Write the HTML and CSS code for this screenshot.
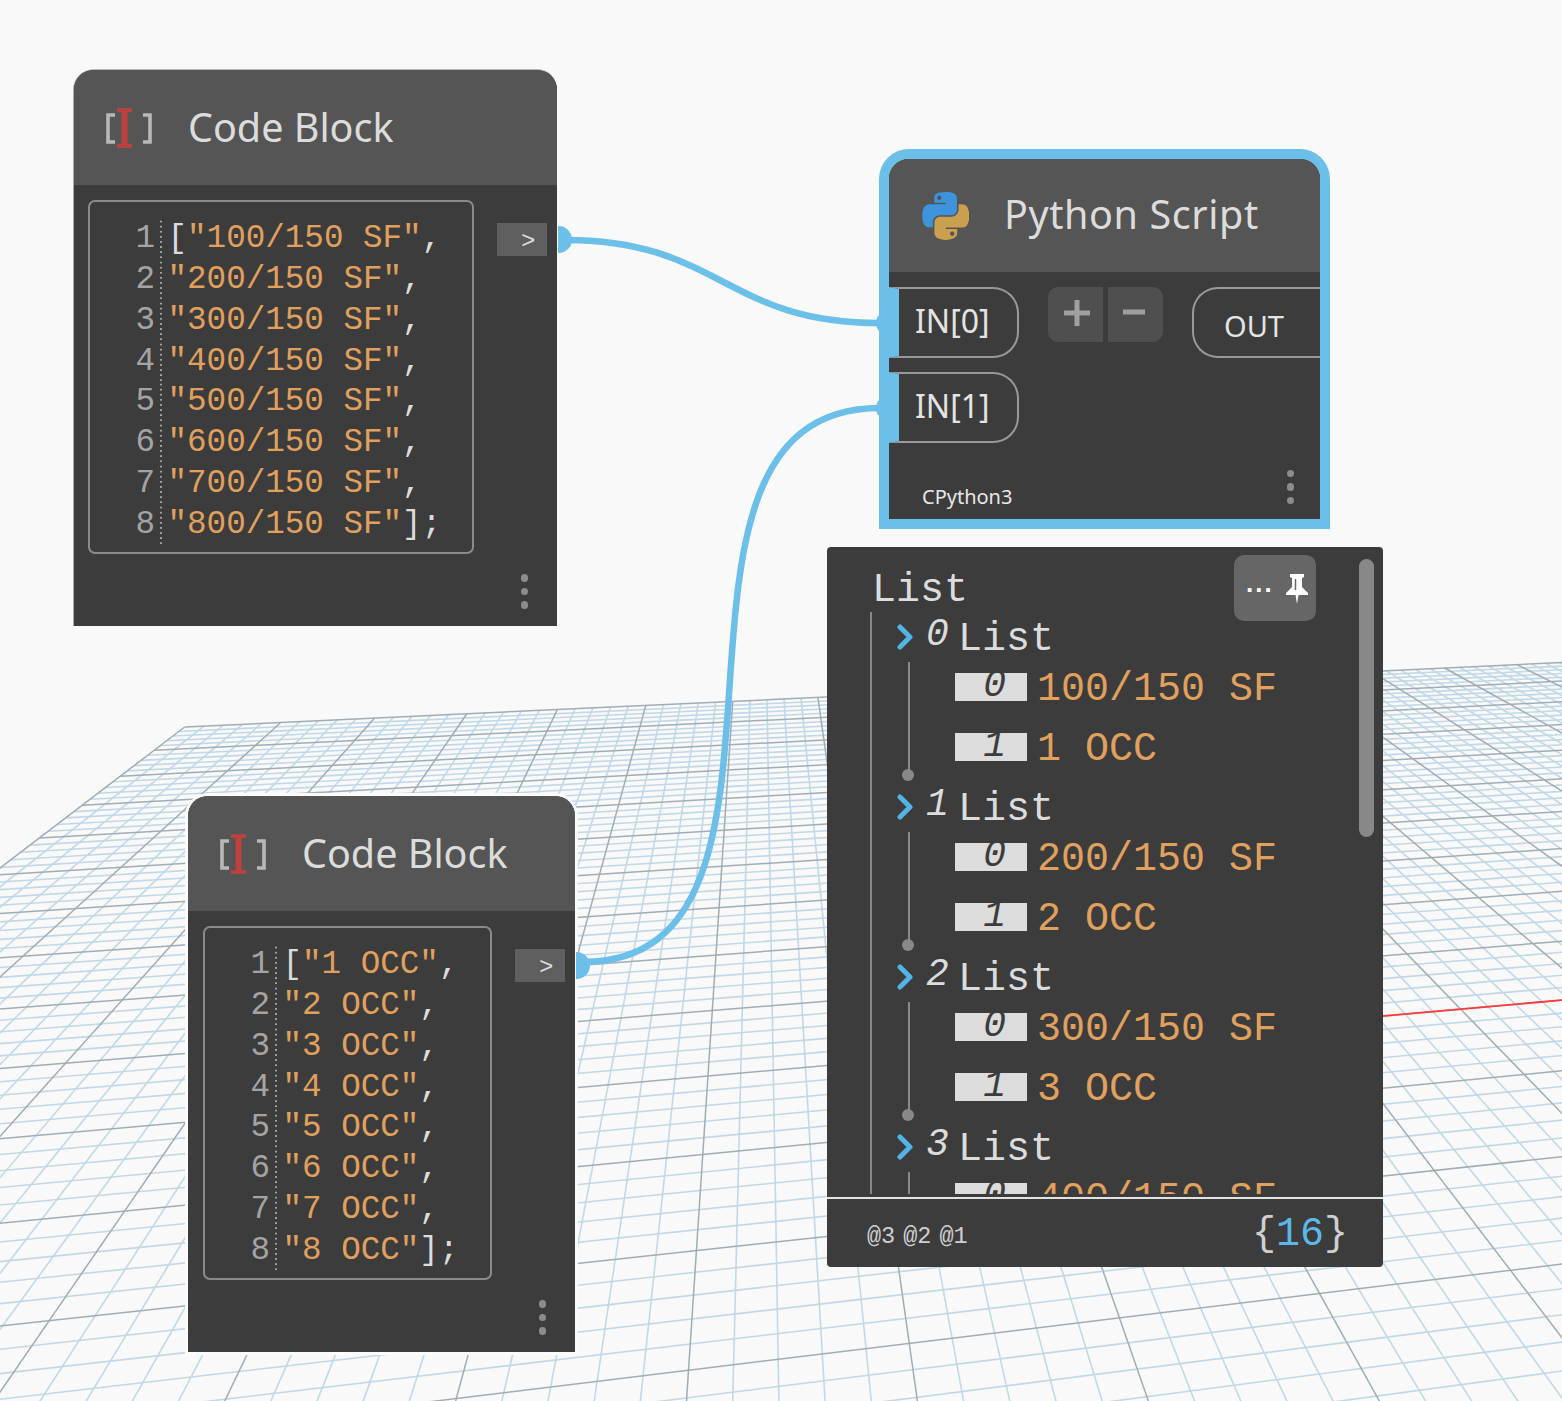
FILE: index.html
```html
<!DOCTYPE html>
<html lang="en">
<head>
<meta charset="utf-8">
<title>Dynamo graph</title>
<link rel="stylesheet" href="styles.css">
</head>
<body>
<main class="canvas">
  <svg id="grid" class="layer" viewBox="0 0 1562 1401" aria-hidden="true"></svg>
  <svg class="layer" viewBox="0 0 1562 1401" aria-hidden="true">
    <path class="wire" d="M565 240 C 720 240, 725 323, 880 323"/>
    <path class="wire" d="M583 962 C 840 962, 618 408, 880 408"/>
  </svg>

  <section class="node code-node node-a">
    <header class="node-head">
      <svg class="cb-icon" viewBox="0 0 48 40"><path class="cb-br" d="M10 7H3V34H10M38 7H45V34H38"/><path class="cb-s" d="M12 2H27M12 38H27"/><path class="cb-i" d="M19.500 2V38"/></svg>
      <h2 class="node-title">Code Block</h2>
    </header>
    <div class="code-body">
      <div class="code-box">
        <div class="cl"><span class="ln">1</span><code><b>[</b><i>"100/150 SF"</i><b>,</b></code></div>
        <div class="cl"><span class="ln">2</span><code><i>"200/150 SF"</i><b>,</b></code></div>
        <div class="cl"><span class="ln">3</span><code><i>"300/150 SF"</i><b>,</b></code></div>
        <div class="cl"><span class="ln">4</span><code><i>"400/150 SF"</i><b>,</b></code></div>
        <div class="cl"><span class="ln">5</span><code><i>"500/150 SF"</i><b>,</b></code></div>
        <div class="cl"><span class="ln">6</span><code><i>"600/150 SF"</i><b>,</b></code></div>
        <div class="cl"><span class="ln">7</span><code><i>"700/150 SF"</i><b>,</b></code></div>
        <div class="cl"><span class="ln">8</span><code><i>"800/150 SF"</i><b>];</b></code></div>
      </div>
      <div class="out-btn">&gt;</div>
    </div>
    <div class="node-foot"><div class="dots"><span></span><span></span><span></span></div></div>
    <span class="out-bump"></span>
  </section>

  <section class="node code-node node-b">
    <header class="node-head">
      <svg class="cb-icon" viewBox="0 0 48 40"><path class="cb-br" d="M10 7H3V34H10M38 7H45V34H38"/><path class="cb-s" d="M12 2H27M12 38H27"/><path class="cb-i" d="M19.500 2V38"/></svg>
      <h2 class="node-title">Code Block</h2>
    </header>
    <div class="code-body">
      <div class="code-box">
        <div class="cl"><span class="ln">1</span><code><b>[</b><i>"1 OCC"</i><b>,</b></code></div>
        <div class="cl"><span class="ln">2</span><code><i>"2 OCC"</i><b>,</b></code></div>
        <div class="cl"><span class="ln">3</span><code><i>"3 OCC"</i><b>,</b></code></div>
        <div class="cl"><span class="ln">4</span><code><i>"4 OCC"</i><b>,</b></code></div>
        <div class="cl"><span class="ln">5</span><code><i>"5 OCC"</i><b>,</b></code></div>
        <div class="cl"><span class="ln">6</span><code><i>"6 OCC"</i><b>,</b></code></div>
        <div class="cl"><span class="ln">7</span><code><i>"7 OCC"</i><b>,</b></code></div>
        <div class="cl"><span class="ln">8</span><code><i>"8 OCC"</i><b>];</b></code></div>
      </div>
      <div class="out-btn">&gt;</div>
    </div>
    <div class="node-foot"><div class="dots"><span></span><span></span><span></span></div></div>
    <span class="out-bump"></span>
  </section>

  <section class="node py-node">
    <header class="py-head">
      <svg class="py-icon" viewBox="0 0 110 112">
        <path fill="#3d93dc" d="M54.900 0C50.300 0.020 45.900 0.400 42.100 1.100 30.800 3.100 28.800 7.300 28.800 15V25.200H55.400V28.600H18.800C11.100 28.600 4.300 33.200 2.200 42.100-0.200 52.200-0.300 58.500 2.200 69.100 4.100 77 8.600 82.600 16.300 82.600H25.400V70.600C25.400 61.800 33 54.100 42 54.100H68.600C76 54.100 81.900 48 81.900 40.600V15C81.900 7.800 75.800 2.400 68.600 1.200 64 0.300 59.500-0.020 54.900 0ZM40.500 8.200C43.300 8.200 45.500 10.500 45.500 13.300 45.500 16.100 43.300 18.300 40.500 18.300 37.700 18.300 35.500 16 35.500 13.300 35.500 10.500 37.800 8.200 40.500 8.200Z"/>
        <path fill="#c9a04e" d="M85.600 28.700V40.600C85.600 49.800 77.800 57.600 69 57.600H42.400C35.100 57.600 29.100 63.800 29.100 71.100V96.500C29.100 103.700 35.400 108 42.400 110 50.800 112.500 58.900 112.900 69 110 75.700 108.100 82.300 104.200 82.300 96.500V86.500H55.700V83.100H95.600C103.300 83.100 106.200 77.700 108.900 69.600 111.700 61.200 111.600 53.200 108.900 42.600 107 34.900 103.300 29.100 95.600 29.100ZM70.700 92.300C73.500 92.300 75.700 94.500 75.700 97.300 75.700 100.100 73.400 102.400 70.700 102.400 67.900 102.400 65.700 100.100 65.700 97.300 65.700 94.500 68 92.300 70.700 92.300Z"/>
      </svg>
      <h2 class="node-title py-title">Python Script</h2>
    </header>
    <div class="py-ports">
      <div class="in-col">
        <div class="port in-port">IN[0]</div>
        <div class="port in-port">IN[1]</div>
      </div>
      <div class="pm">
        <button class="pm-btn pm-add" type="button" aria-label="add"><svg viewBox="0 0 26 26"><path d="M0 13H26M13 0V26"/></svg></button>
        <button class="pm-btn pm-sub" type="button" aria-label="remove"><svg viewBox="0 0 22 26"><path d="M0 12H22"/></svg></button>
      </div>
      <div class="port out-port">OUT</div>
    </div>
    <footer class="py-foot">
      <span class="engine">CPython3</span>
      <div class="dots"><span></span><span></span><span></span></div>
    </footer>
    <span class="in-bump bump-0"></span>
    <span class="in-bump bump-1"></span>
  </section>

  <section class="node watch">
    <div class="watch-scroll">
      <div class="root-label">List</div>
      <div class="tree">
        <div class="group">
          <div class="g-head"><svg class="chev" viewBox="0 0 16 26"><path d="M3 3L13 13L3 23"/></svg><span class="g-idx">0</span><span class="g-label">List</span></div>
          <div class="children">
            <div class="item"><span class="tag"><em>0</em></span><span class="val">100/150 SF</span></div>
            <div class="item"><span class="tag"><em>1</em></span><span class="val">1 OCC</span></div>
          </div>
        </div>
        <div class="group">
          <div class="g-head"><svg class="chev" viewBox="0 0 16 26"><path d="M3 3L13 13L3 23"/></svg><span class="g-idx">1</span><span class="g-label">List</span></div>
          <div class="children">
            <div class="item"><span class="tag"><em>0</em></span><span class="val">200/150 SF</span></div>
            <div class="item"><span class="tag"><em>1</em></span><span class="val">2 OCC</span></div>
          </div>
        </div>
        <div class="group">
          <div class="g-head"><svg class="chev" viewBox="0 0 16 26"><path d="M3 3L13 13L3 23"/></svg><span class="g-idx">2</span><span class="g-label">List</span></div>
          <div class="children">
            <div class="item"><span class="tag"><em>0</em></span><span class="val">300/150 SF</span></div>
            <div class="item"><span class="tag"><em>1</em></span><span class="val">3 OCC</span></div>
          </div>
        </div>
        <div class="group">
          <div class="g-head"><svg class="chev" viewBox="0 0 16 26"><path d="M3 3L13 13L3 23"/></svg><span class="g-idx">3</span><span class="g-label">List</span></div>
          <div class="children">
            <div class="item"><span class="tag"><em>0</em></span><span class="val">400/150 SF</span></div>
            <div class="item"><span class="tag"><em>1</em></span><span class="val">4 OCC</span></div>
          </div>
        </div>
      </div>
    </div>
    <div class="watch-foot">
      <div class="levels"><span>@3</span><span>@2</span><span>@1</span></div>
      <div class="count">{<span>16</span>}</div>
    </div>
    <div class="pin-btn">
      <span class="pin-more">...</span>
      <svg class="pin" viewBox="0 0 22 30"><path d="M4 0H18V3L16 4V13L22 19V21H12.500L11 30 9.500 21H0V19L6 13V4L4 3Z"/><path class="pin-slot" d="M9.500 5V16"/></svg>
    </div>
    <div class="scrollbar"></div>
  </section>
</main>
<script src="grid.js"></script>
</body>
</html>
```
FILE: styles.css
```css
* { box-sizing: border-box; }
html, body { margin: 0; padding: 0; }
body { background: #f9f9f9; overflow: hidden; }
.canvas { position: relative; width: 1562px; height: 1401px; overflow: hidden; font-family: "Noto Sans", sans-serif; }
.layer { position: absolute; left: 0; top: 0; width: 1562px; height: 1401px; }
.wire { fill: none; stroke: #6bbfe8; stroke-width: 6.500; }

.grid-minor { stroke: #c2d8e7; stroke-width: 1.600; }
.grid-major { stroke: #a0adb4; stroke-width: 1.500; }
.grid-axis { stroke: #ff3a3a; stroke-width: 1.800; }

.node { position: absolute; background: #3c3c3c; color: #dcdcdc; }
.node-title { margin: 0 0 2px; font-size: 39.500px; line-height: 50px; font-weight: 400; color: #dcdcdc; }
.py-title { margin-bottom: 4px; letter-spacing: 0.600px; }

/* code block */
.code-node { display: flex; flex-direction: column; border-radius: 20px 20px 0 0; }
.node-a { left: 74px; top: 70px; width: 483px; height: 556px; box-shadow: 0 -1px 0 0 #8a8a8a99, -1px 0 0 0 #aaaaaa; }
.node-b { left: 188px; top: 796px; width: 387px; height: 556px; box-shadow: 0 0 0 3px #fbfbfb; }
.node-head { display: flex; align-items: center; height: 115px; flex: none; padding-left: 31px; gap: 35px; background: #555; border-radius: 20px 20px 0 0; }
.cb-icon { width: 48px; height: 40px; flex: none; }
.cb-br { fill: none; stroke: #b8b8b8; stroke-width: 3.600; }
.cb-s { fill: none; stroke: #c04040; stroke-width: 3.600; }
.cb-i { fill: none; stroke: #c04040; stroke-width: 6; }
.code-body { display: flex; align-items: flex-start; padding: 15px 10px 0 14px; flex: none; }
.node-b .code-body { padding-left: 15px; }
.code-box { flex: 1; height: 354px; padding-top: 17px; border: 2px solid #8a8a8a; border-radius: 7px; }
.cl { display: flex; height: 40.860px; font: 32.600px/40.860px "Liberation Mono", monospace; }
.ln { flex: none; width: 72px; padding-right: 7px; text-align: right; color: #a4a4a4; background: radial-gradient(circle, #a6a6a6 1px, transparent 1.300px) right top / 2px 5.108px repeat-y; }
.cl code { font: inherit; padding-left: 5.500px; white-space: pre; }
.cl i { font-style: normal; color: #e0a05e; }
.cl b { font-weight: 400; color: #dcdcdc; }
.out-btn { flex: none; width: 50px; height: 33px; margin: 23px 0 0 23px; padding-left: 24px; background: #5f5f5f; color: #dcdcdc; font: 24px/37px "Liberation Mono", monospace; }
.node-foot { display: flex; justify-content: flex-end; padding: 20px 29px 0 0; }
.dots { display: flex; flex-direction: column; gap: 6px; }
.dots span { display: block; width: 7.500px; height: 7.500px; border-radius: 50%; background: #8c8c8c; }
.out-bump { position: absolute; right: -15px; top: 156px; width: 14px; height: 27px; background: #6bbfe8; border-radius: 0 14px 14px 0; }

/* python */
.py-node { left: 879px; top: 149px; width: 451px; height: 380px; border: 10px solid #6bbfe8; border-radius: 30px 30px 0 0; display: flex; flex-direction: column; }
.py-head { display: flex; align-items: center; height: 113px; flex: none; padding-left: 33px; gap: 35px; background: #555; border-radius: 20px 20px 0 0; }
.py-icon { width: 47px; height: 48px; flex: none; }
.py-ports { display: flex; align-items: flex-start; padding-top: 15px; }
.in-col { display: flex; flex-direction: column; gap: 14px; flex: none; }
.port { font-size: 32px; height: 71px; color: #e4e4e4; border: 2px solid #999; display: flex; align-items: center; }
.in-port { width: 130px; border-left: 10px solid #6bbfe8; border-radius: 0 26px 26px 0; padding: 0 0 4px 16px; }
.out-port { width: 128px; margin-left: 29px; border-right: 0; border-radius: 26px 0 0 26px; padding: 6px 0 0 30px; font-size: 29px; }
.pm { display: flex; gap: 5px; margin-left: 29px; flex: none; }
.pm-btn { display: flex; align-items: center; justify-content: center; width: 55px; height: 55px; padding: 0; border: 0; background: #4f4f4f; }
.pm-add { border-radius: 10px 0 0 10px; padding-left: 2px; }
.pm-sub { border-radius: 0 10px 10px 0; padding-right: 3px; }
.pm-add svg { width: 26px; height: 26px; margin-top: -3px; }
.pm-sub svg { width: 22px; height: 26px; margin-top: -3px; }
.pm-btn path { stroke: #a0a0a0; stroke-width: 5; fill: none; }
.py-foot { display: flex; justify-content: space-between; align-items: flex-end; height: 76px; padding: 0 26px 15px 33px; }
.engine { font-size: 20px; line-height: 24px; margin-bottom: -5px; color: #e8e8e8; }
.in-bump { position: absolute; width: 13px; height: 24px; left: -13px; border-radius: 13px 0 0 13px; background: #6bbfe8; }
.bump-0 { top: 152px; }
.bump-1 { top: 237px; }

/* watch */
.watch { left: 827px; top: 547px; width: 556px; height: 720px; border-radius: 4px; display: flex; flex-direction: column; font-family: "Liberation Mono", monospace; }
.watch-scroll { height: 647px; flex: none; padding-top: 15px; overflow: hidden; }
.root-label { padding: 4px 0 0 45px; height: 50px; font-size: 40px; line-height: 50px; color: #dcdcdc; }
.tree { margin-left: 43px; border-left: 2px solid #888; }
.group { display: flex; flex-direction: column; }
.g-head { display: flex; align-items: center; height: 50px; padding-left: 25px; }
.chev { width: 16px; height: 26px; flex: none; }
.chev path { fill: none; stroke: #52b4e4; stroke-width: 5; stroke-linecap: round; stroke-linejoin: round; }
.g-idx { width: 45px; padding-left: 13px; font-size: 38px; line-height: 40px; font-style: italic; margin-bottom: 4px; color: #dcdcdc; }
.g-label { font-size: 40px; line-height: 50px; margin-top: 6px; color: #dcdcdc; }
.children { position: relative; display: flex; flex-direction: column; gap: 10px; height: 108px; margin: 0 0 12px 36px; border-left: 2px solid #888; }
.children::after { content: ""; position: absolute; left: -8px; bottom: -11px; width: 12px; height: 12px; border-radius: 50%; background: #888; }
.item { display: flex; align-items: center; height: 50px; flex: none; padding-left: 45px; }
.tag { flex: none; width: 72px; height: 28px; padding-right: 21px; text-align: right; background: #dcdcdc; color: #3c3c3c; }
.tag em { display: block; font-size: 38px; line-height: 25px; font-style: italic; }
.val { margin: 6px 0 0 10px; font-size: 40px; line-height: 50px; color: #e0a05e; white-space: pre; }
.watch-foot { display: flex; justify-content: space-between; align-items: center; height: 70px; margin-top: 3px; padding: 0 35px 0 40px; border-top: 2px solid #e2e2e2; }
.levels { display: flex; gap: 8px; margin-top: 6px; font-size: 23.500px; color: #cfcfcf; }
.count { font-size: 40px; line-height: 50px; margin-top: 4px; color: #cfcfcf; }
.count span { color: #5bb8e8; }
.pin-btn { position: absolute; left: 407px; top: 8px; width: 82px; height: 66px; display: flex; align-items: center; padding-left: 12px; gap: 12px; background: #666; border-radius: 10px; color: #fff; }
.pin-more { font: 700 26px/24px "Liberation Sans", sans-serif; letter-spacing: 2px; margin-top: -10px; }
.pin { width: 22px; height: 30px; margin-top: 1px; fill: #fff; flex: none; }
.pin-slot { fill: none; stroke: #666; stroke-width: 1.500; }
.scrollbar { position: absolute; left: 532px; top: 12px; width: 15px; height: 278px; border-radius: 8px; background: #888; }
```
FILE: grid.js
```js
// Perspective floor grid: rows converge on VP2, columns converge on VP1.
(function () {
  var svg = document.getElementById('grid');
  var NS = 'http://www.w3.org/2000/svg';
  var vp1 = { x: 760, y: 288 };
  var vp2 = { x: 9600, y: 286 };
  var corner = { x: 185, y: 727 };

  function rowStart(n) {
    var y = 288 + 1 / (0.002278 - 0.000115 * n);
    var k = (corner.x - vp1.x) / (corner.y - vp1.y);
    return { x: corner.x + k * (y - corner.y), y: y };
  }
  function colStart(m) {
    var x = vp2.x - 1 / (106.21e-6 + 1.094e-6 * m);
    var k = (vp2.y - corner.y) / (vp2.x - corner.x);
    return { x: x, y: corner.y + k * (x - corner.x) };
  }
  function intersect(a, b, c, d) {
    var r = (b.x - a.x) * (d.y - c.y) - (b.y - a.y) * (d.x - c.x);
    var t = ((c.x - a.x) * (d.y - c.y) - (c.y - a.y) * (d.x - c.x)) / r;
    return { x: a.x + t * (b.x - a.x), y: a.y + t * (b.y - a.y) };
  }
  function line(p, q, cls) {
    var el = document.createElementNS(NS, 'line');
    el.setAttribute('x1', p.x.toFixed(1));
    el.setAttribute('y1', p.y.toFixed(1));
    el.setAttribute('x2', q.x.toFixed(1));
    el.setAttribute('y2', q.y.toFixed(1));
    el.setAttribute('class', cls);
    svg.appendChild(el);
  }
  function row(n, cls, mFrom) {
    var s = rowStart(n);
    var a = mFrom ? intersect(s, vp2, colStart(mFrom), vp1) : s;
    line(a, intersect(s, vp2, colStart(24), vp1), cls);
  }
  function col(m, cls) {
    var s = colStart(m);
    line(s, intersect(s, vp1, rowStart(19), vp2), cls);
  }
  var i;
  for (i = 0; i <= 95; i++) { if (i % 5) { row(i / 5, 'grid-minor'); } }
  for (i = 0; i <= 120; i++) { if (i % 5) { col(i / 5, 'grid-minor'); } }
  for (i = 0; i <= 19; i++) { row(i, 'grid-major'); }
  for (i = 0; i <= 24; i++) { col(i, 'grid-major'); }
  row(10, 'grid-axis', 10);
})();
```
